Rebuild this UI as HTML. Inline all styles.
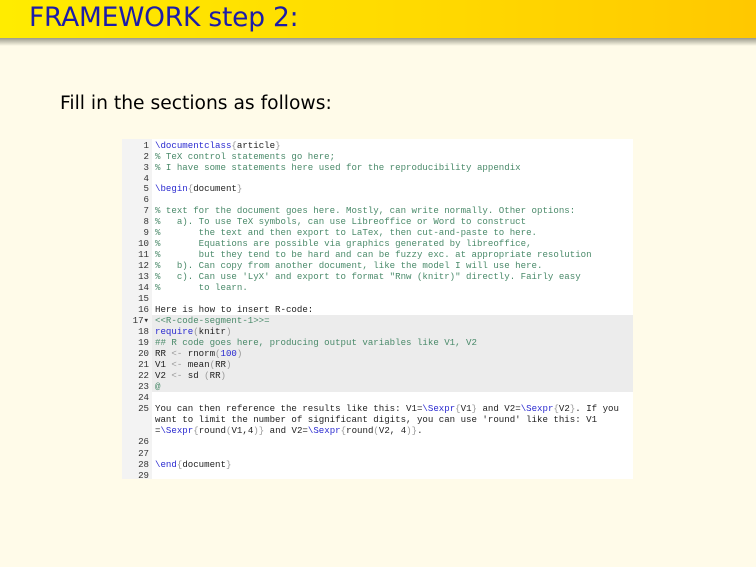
<!DOCTYPE html>
<html><head><meta charset="utf-8"><style>
html,body{margin:0;padding:0;width:756px;height:567px;overflow:hidden;background:#fffbe9;font-family:"DejaVu Sans","Liberation Sans",sans-serif}
#hd{position:absolute;left:0;top:0;width:756px;height:38px;background:linear-gradient(90deg,#ffec00 0%,#ffd800 60%,#ffc800 100%)}
#sh{position:absolute;left:0;top:38px;width:756px;height:8px;background:linear-gradient(#9a9a8a,#fffbe9)}
#ttl{position:absolute;left:29px;top:2px;font-size:27px;color:#1c1ca8;letter-spacing:-0.2px;transform:scaleX(0.98);transform-origin:left}
#fill{position:absolute;left:60px;top:93px;font-size:18.7px;color:#000}
#box{position:absolute;left:122px;top:139px;width:511px;height:340px;background:#fff}
#gut{position:absolute;left:0;top:0;width:30px;height:340px;background:#f3f3f3}
.l{position:absolute;left:0;width:511px;height:11px;font-family:"Liberation Mono","DejaVu Sans Mono",monospace;font-size:9.1px;line-height:11px;white-space:pre;color:#222}
.n{display:inline-block;width:27px;text-align:right;color:#333;margin-right:6px}
.c{color:#4a8a6a}.k{color:#2a2ad0}.g{color:#999}
.r{background:linear-gradient(90deg,#f3f3f3 30px,#ececec 30px)}
</style></head><body>
<div id="hd"></div><div id="sh"></div>
<div id="ttl">FRAMEWORK step 2:</div>
<div id="fill">Fill in the sections as follows:</div>
<div id="box"><div id="gut"></div>
<div class="l" style="top:1px"><span class="n">1</span><span class="k">\documentclass</span><span class="g">{</span>article<span class="g">}</span></div>
<div class="l" style="top:12px"><span class="n">2</span><span class="c">% TeX control statements go here;</span></div>
<div class="l" style="top:23px"><span class="n">3</span><span class="c">% I have some statements here used for the reproducibility appendix</span></div>
<div class="l" style="top:34px"><span class="n">4</span></div>
<div class="l" style="top:44px"><span class="n">5</span><span class="k">\begin</span><span class="g">{</span>document<span class="g">}</span></div>
<div class="l" style="top:55px"><span class="n">6</span></div>
<div class="l" style="top:66px"><span class="n">7</span><span class="c">% text for the document goes here. Mostly, can write normally. Other options:</span></div>
<div class="l" style="top:77px"><span class="n">8</span><span class="c">%   a). To use TeX symbols, can use Libreoffice or Word to construct</span></div>
<div class="l" style="top:88px"><span class="n">9</span><span class="c">%       the text and then export to LaTex, then cut-and-paste to here.</span></div>
<div class="l" style="top:99px"><span class="n">10</span><span class="c">%       Equations are possible via graphics generated by libreoffice,</span></div>
<div class="l" style="top:110px"><span class="n">11</span><span class="c">%       but they tend to be hard and can be fuzzy exc. at appropriate resolution</span></div>
<div class="l" style="top:121px"><span class="n">12</span><span class="c">%   b). Can copy from another document, like the model I will use here.</span></div>
<div class="l" style="top:132px"><span class="n">13</span><span class="c">%   c). Can use 'LyX' and export to format "Rnw (knitr)" directly. Fairly easy</span></div>
<div class="l" style="top:143px"><span class="n">14</span><span class="c">%       to learn.</span></div>
<div class="l" style="top:154px"><span class="n">15</span></div>
<div class="l" style="top:165px"><span class="n">16</span>Here is how to insert R-code:</div>
<div class="l r" style="top:176px"><span class="n">17▾</span><span class="c">&lt;&lt;R-code-segment-1&gt;&gt;=</span></div>
<div class="l r" style="top:187px"><span class="n">18</span><span class="k">require</span><span class="g">(</span>knitr<span class="g">)</span></div>
<div class="l r" style="top:198px"><span class="n">19</span><span class="c">## R code goes here, producing output variables like V1, V2</span></div>
<div class="l r" style="top:209px"><span class="n">20</span>RR <span class="g">&lt;-</span> rnorm<span class="g">(</span><span class="k">100</span><span class="g">)</span></div>
<div class="l r" style="top:220px"><span class="n">21</span>V1 <span class="g">&lt;-</span> mean<span class="g">(</span>RR<span class="g">)</span></div>
<div class="l r" style="top:231px"><span class="n">22</span>V2 <span class="g">&lt;-</span> sd <span class="g">(</span>RR<span class="g">)</span></div>
<div class="l r" style="top:242px"><span class="n">23</span><span class="c">@</span></div>
<div class="l" style="top:253px"><span class="n">24</span></div>
<div class="l" style="top:264px"><span class="n">25</span>You can then reference the results like this: V1=<span class="k">\Sexpr</span><span class="g">{</span>V1<span class="g">}</span> and V2=<span class="k">\Sexpr</span><span class="g">{</span>V2<span class="g">}</span>. If you</div>
<div class="l" style="top:275px"><span class="n"></span>want to limit the number of significant digits, you can use 'round' like this: V1</div>
<div class="l" style="top:286px"><span class="n"></span>=<span class="k">\Sexpr</span><span class="g">{</span>round<span class="g">(</span>V1,4<span class="g">)}</span> and V2=<span class="k">\Sexpr</span><span class="g">{</span>round<span class="g">(</span>V2, 4<span class="g">)}</span>.</div>
<div class="l" style="top:297px"><span class="n">26</span></div>
<div class="l" style="top:309px"><span class="n">27</span></div>
<div class="l" style="top:320px"><span class="n">28</span><span class="k">\end</span><span class="g">{</span>document<span class="g">}</span></div>
<div class="l" style="top:331px"><span class="n">29</span></div>
</div>
</body></html>
